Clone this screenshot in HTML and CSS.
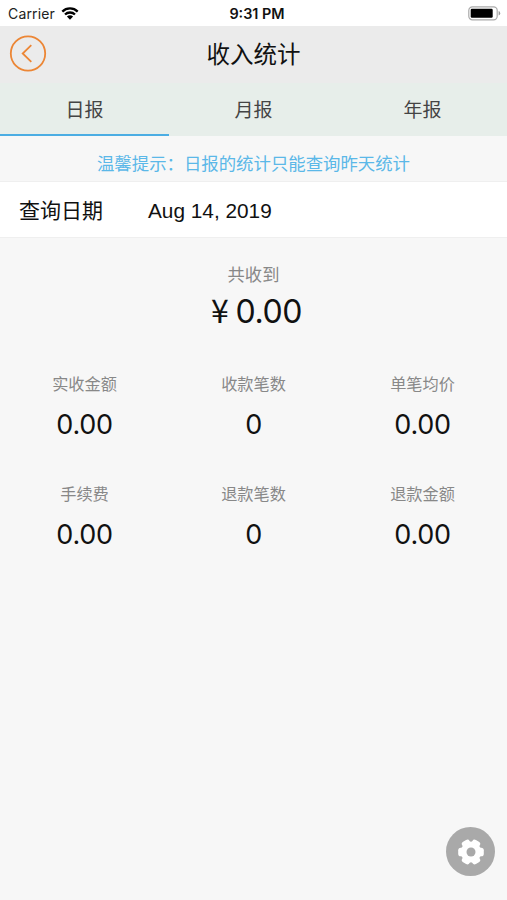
FILE: index.html
```
<!DOCTYPE html>
<html lang="zh-CN">
<head>
	<meta charset="utf-8">
	<title>收入统计</title>
	<link rel="stylesheet" href="styles.css">
</head><body>
	<div class="status">
		<div class="carrier">Carrier
			<svg width="18" height="13" viewBox="0 0 18 13">
				<path d="M1.3 4.6a11 11 0 0 1 15.4 0M4 7.5a7.2 7.2 0 0 1 10 0" fill="none" stroke="#000" stroke-width="2.3"/>
				<path d="M5.9 9.6a4.5 4.5 0 0 1 6.2 0L9 12.8z"/>
			</svg>
		</div>
		<div class="time">9:31 PM</div>
		<div class="battery">
			<svg width="33" height="15" viewBox="0 0 33 15">
				<rect x=".8" y=".8" width="28.4" height="13" rx="3.6" fill="#fff" stroke="#aaa" stroke-width="1.2"/>
				<rect x="2.7" y="2.8" width="22" height="9" rx="1.2"/>
				<path d="M30.6 5q1.6.6 1.6 2.3t-1.6 2.3z" fill="#999"/>
			</svg>
		</div>
	</div>

	<header class="navbar">
		<a class="back" href="#">
			<svg width="38" height="38" viewBox="0 0 38 38" fill="none" stroke="#ec8635">
				<circle cx="19" cy="18.5" r="17.2" stroke-width="1.8"/>
				<path d="M22.3 10.2l-8.6 8.3 8.6 8.3" stroke-width="1.8"/>
			</svg>
		</a>
		<h1>收入统计</h1>
	</header>

	<nav class="tabs">
		<a class="tab active">日报</a>
		<a class="tab">月报</a>
		<a class="tab">年报</a>
	</nav>

	<p class="tip">温馨提示：日报的统计只能查询昨天统计</p>

	<div class="query">
		<label>查询日期</label>
		<span class="date">Aug 14, 2019</span>
	</div>

	<div class="total">
		<div class="total-label">共收到</div>
		<div class="total-num"><span class="yen">¥</span>0.00</div>
	</div>

	<div class="grid">
		<div class="item"><span>实收金额</span><b>0.00</b></div>
		<div class="item"><span>收款笔数</span><b>0</b></div>
		<div class="item"><span>单笔均价</span><b>0.00</b></div>
		<div class="item"><span>手续费</span><b>0.00</b></div>
		<div class="item"><span>退款笔数</span><b>0</b></div>
		<div class="item"><span>退款金额</span><b>0.00</b></div>
	</div>

	<a class="setting" href="#">
		<svg width="28" height="28" viewBox="-14 -14 28 28">
			<g fill="#fff">
				<circle r="10.4"/>
				<rect id="tooth" x="-12.8" y="-4.3" width="25.6" height="8.6" rx="2.6"/>
				<use href="#tooth" transform="rotate(60)"/>
				<use href="#tooth" transform="rotate(120)"/>
			</g>
			<circle r="4.5" fill="#a9a9a9"/>
		</svg>
	</a>
</body></html>
```

FILE: styles.css
```
html,body{margin:0;padding:0;height:100%;}
body{
	background:#f7f7f7;
	color:#111;
	font-family:"Liberation Sans","Noto Sans CJK SC",sans-serif;
}
.status{
	display:flex;
	height:26px;
	line-height:27px;
	background:#fff;
	font-family:Inter,sans-serif;
	font-size:14px;
}
.status div{flex:1;box-sizing:border-box;}
.status .carrier{padding-left:8px;color:#222;letter-spacing:.15px;}
.carrier svg{vertical-align:-1px;margin-left:2px;}
.status .time{text-align:center;font-weight:600;font-size:14.4px;padding-left:5px;}
.status .battery{display:flex;justify-content:flex-end;align-items:center;padding-right:6px;}
.navbar{
	display:grid;
	grid-template-columns:56px 1fr 56px;
	align-items:center;
	height:57px;
	background:#ebebeb;
}
.back{display:block;height:38px;padding-left:9px;margin-bottom:2px;}
.navbar h1{
	margin:1px 0 0;
	text-align:center;
	font-size:23.5px;
	line-height:30px;
	font-weight:normal;
}
.tabs{display:flex;background:#e7eeea;}
.tab{
	flex:1;
	height:51px;
	line-height:55px;
	border-bottom:2px solid transparent;
	text-align:center;
	font-size:19px;
	color:#444;
}
.tab.active{border-bottom-color:#4bade3;}
.tip{
	margin:0;
	height:45px;
	line-height:56px;
	text-align:center;
	font-size:17.4px;
	color:#5bb8e8;
}
.query{
	display:flex;
	align-items:center;
	height:57px;
	padding-left:19px;
	background:#fff;
	border-top:1px solid #efefef;
	border-bottom:1px solid #efefef;
	box-sizing:border-box;
}
.query label{width:129px;font-size:21px;padding-bottom:2px;}
.date{font-size:20.8px;padding-top:2px;}
.total{text-align:center;padding-top:25px;}
.total-label{font-size:17.3px;line-height:24px;color:#888;}
.total-num{
	font-family:Inter,sans-serif;
	font-size:32px;
	line-height:40px;
	margin-top:5px;
	letter-spacing:-.4px;
	padding-left:6px;
}
.yen{font-family:"Noto Sans CJK SC",sans-serif;font-size:32px;line-height:1;margin-right:7px;}
.grid{
	display:grid;
	grid-template-columns:repeat(3,1fr);
	row-gap:38px;
	margin-top:41px;
	text-align:center;
}
.item{height:72px;}
.item span{display:block;font-size:16.2px;line-height:22px;color:#888;}
.item b{
	display:block;
	margin-top:12px;
	font:27px/36px Inter,sans-serif;
	letter-spacing:-.3px;
}
.setting{
	position:fixed;
	right:12px;
	bottom:24px;
	width:49px;
	height:49px;
	border-radius:50%;
	background:#a9a9a9;
	display:flex;
	align-items:center;
	justify-content:center;
}
```
